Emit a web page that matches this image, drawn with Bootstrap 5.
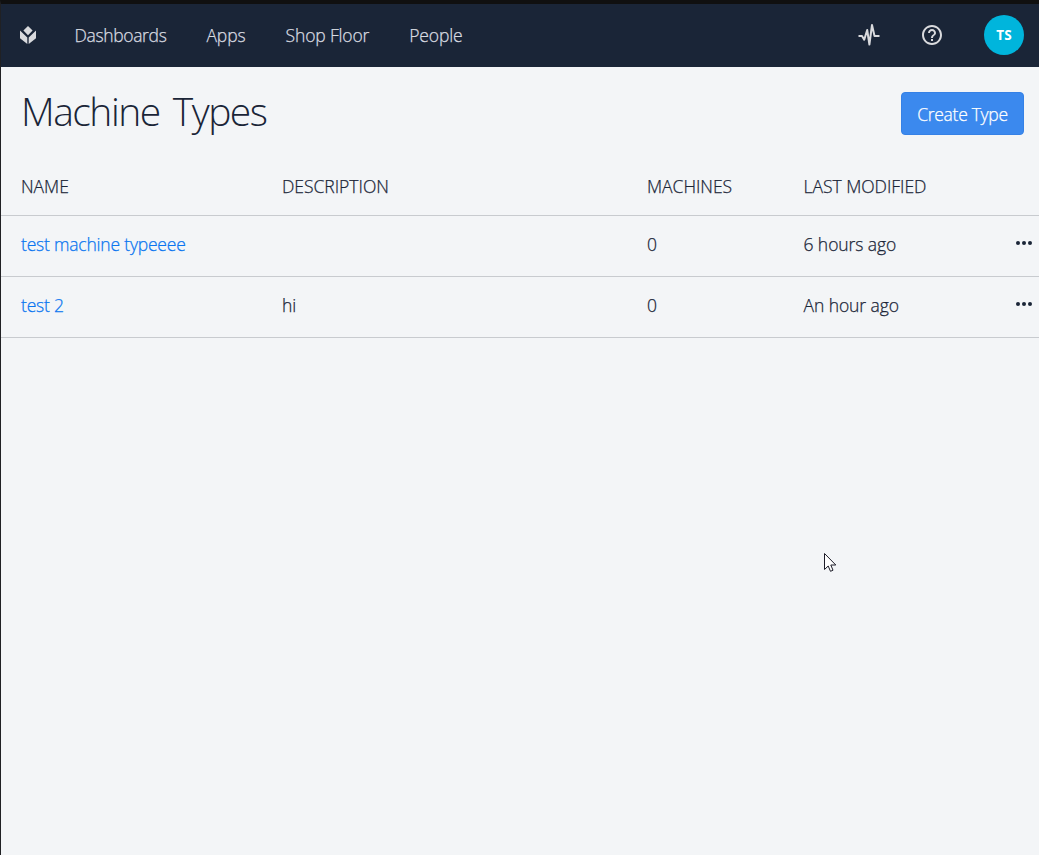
<!DOCTYPE html>
<html lang="en">
<head>
<meta charset="utf-8">
<meta name="viewport" content="width=device-width, initial-scale=1">
<title>Machine Types</title>
<link href="https://cdn.jsdelivr.net/npm/bootstrap@5.3.0/dist/css/bootstrap.min.css" rel="stylesheet">
<style>
body{font-family:"Segoe UI","Open Sans","Noto Sans",sans-serif;font-weight:300;font-size:17.5px;line-height:24px;color:#1a2537;background:#f3f5f7;border-left:1px solid #202124;border-top:4px solid #101010;min-height:100vh;overflow:hidden}
.topbar{height:63px;background:#1a2537;padding:0 15px 2px 18px}
.topbar .nav-link{color:#d9dce1;padding:0;line-height:24px;white-space:nowrap}
.nav-link,.types,.btn-create{-webkit-text-stroke:.25px currentColor}
.logo{width:18px;height:20px;margin-right:37.5px}
.menu{gap:40px}
.menu .nav-link{letter-spacing:-.35px}
.menu .nav-link:nth-child(2){letter-spacing:-.1px}
.menu .nav-link:nth-child(n+3){letter-spacing:-.15px}
.avatar{width:40px;height:40px;background:#00b5dc;color:#fff;font-size:13.5px;font-weight:700}
.page-head{height:93px;padding:25px 15px 0 20px}
.page-title{font-size:39px;line-height:37px;font-weight:300;letter-spacing:-1.5px;word-spacing:4.5px;margin:0}
.btn-create{width:123px;height:43px;padding:2px 0 0;background:#3b89ee;border:1px solid #3581e6;border-radius:4px;color:#fff;font-size:17.5px;font-weight:300;letter-spacing:-.3px}
.types{table-layout:fixed;width:100%;border-collapse:separate;border-spacing:0}
.types th,.types td{height:61px;padding:0 0 5px;border-bottom:1px solid #c8cbcf;font-weight:300;vertical-align:middle;white-space:nowrap;letter-spacing:-.2px}
.types td:nth-child(4){letter-spacing:-.08px}
.types th{height:56px;padding-bottom:3px;letter-spacing:-.02px}
.types th:first-child,.types td:first-child{padding-left:20px}
.types a{color:#0a75f0}
.dots{width:16px;height:4px;display:block;margin-top:-2px}
.pointer{position:absolute;left:824px;top:552px}
</style>
</head>
<body>
<nav class="topbar d-flex align-items-center">
  <svg class="logo" viewBox="0 0 18 20" fill="#d9dadd"><path d="M9 1 13.6 5.6 9 10.2 4.4 5.6zM1 5.6 8.3 12.4V19L1 13.2zM17 5.6 9.7 12.4V19L17 13.2z"/></svg>
  <div class="menu d-flex">
    <a class="nav-link" href="#">Dashboards</a>
    <a class="nav-link" href="#">Apps</a>
    <a class="nav-link" href="#">Shop Floor</a>
    <a class="nav-link" href="#">People</a>
  </div>
  <div class="ms-auto d-flex align-items-center">
    <svg width="22" height="24" viewBox="0 0 22 24" fill="none" stroke="#d9dadd" stroke-width="2" stroke-linejoin="round" style="margin-right:40.5px"><path d="M.5 13H4l2.200 3.700L9.200 7l2.200 14.500L14 2l2.500 11h5"/></svg>
    <svg width="24" height="24" viewBox="0 0 24 24" fill="#d9dadd" style="margin-right:40px"><path d="M11 18h2v-2h-2v2zm1-16C6.480 2 2 6.480 2 12s4.480 10 10 10 10-4.480 10-10S17.520 2 12 2zm0 18c-4.410 0-8-3.590-8-8s3.590-8 8-8 8 3.590 8 8-3.590 8-8 8zm0-14c-2.210 0-4 1.790-4 4h2c0-1.100.9-2 2-2s2 .9 2 2c0 2-3 1.750-3 5h2c0-2.250 3-2.500 3-5 0-2.210-1.790-4-4-4z"/></svg>
    <div class="avatar rounded-circle d-flex align-items-center justify-content-center">TS</div>
  </div>
</nav>
<main>
  <header class="page-head d-flex justify-content-between align-items-start">
    <h1 class="page-title">Machine Types</h1>
    <button class="btn btn-create" type="button">Create Type</button>
  </header>
  <table class="types">
    <colgroup><col style="width:281px"><col style="width:365px"><col style="width:156.5px"><col style="width:212.5px"><col></colgroup>
    <thead><tr><th>NAME</th><th>DESCRIPTION</th><th>MACHINES</th><th>LAST MODIFIED</th><th></th></tr></thead>
    <tbody>
      <tr><td><a class="text-decoration-none" href="#">test machine typeeee</a></td><td></td><td>0</td><td>6 hours ago</td><td><svg class="dots" viewBox="0 0 16 4" fill="#1a2537"><circle cx="2" cy="2" r="2"/><circle cx="8" cy="2" r="2"/><circle cx="14" cy="2" r="2"/></svg></td></tr>
      <tr><td><a class="text-decoration-none" href="#">test 2</a></td><td>hi</td><td>0</td><td>An hour ago</td><td><svg class="dots" viewBox="0 0 16 4" fill="#1a2537"><circle cx="2" cy="2" r="2"/><circle cx="8" cy="2" r="2"/><circle cx="14" cy="2" r="2"/></svg></td></tr>
    </tbody>
  </table>
</main>
<svg class="pointer" width="13" height="21" viewBox="0 0 13 21" fill="#fff" stroke="#1c1c28"><path d="M.5 1.500V17.500L4.200 14 6.500 19.300 9 18.200 6.800 13H11.800z"/></svg>
<script src="https://cdn.jsdelivr.net/npm/bootstrap@5.3.0/dist/js/bootstrap.bundle.min.js"></script>
</body>
</html>
